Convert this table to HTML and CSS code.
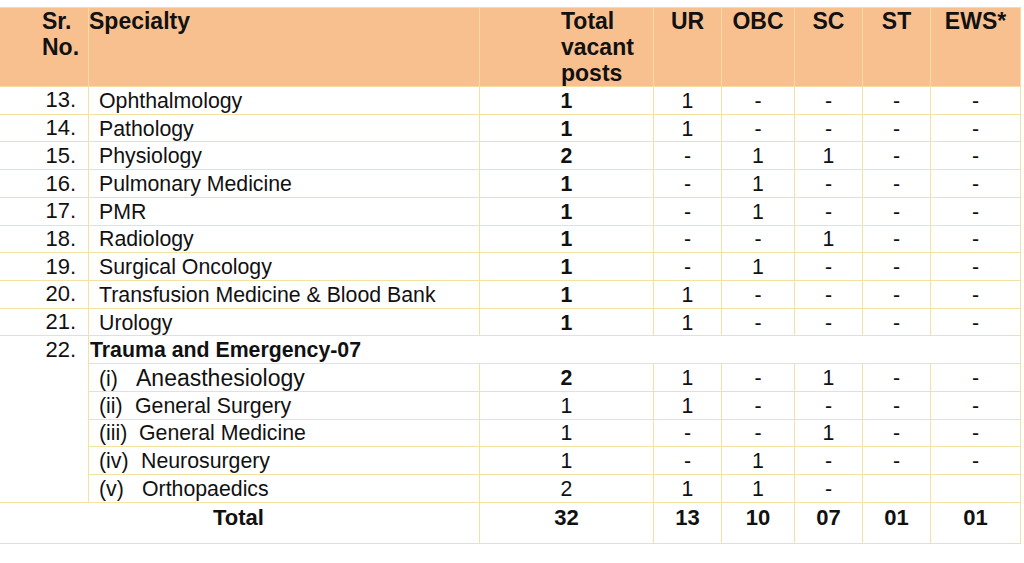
FILE: index.html
```html
<!DOCTYPE html>
<html>
<head>
<meta charset="utf-8">
<link rel="stylesheet" href="styles.css">
</head>
<body>
<table class="posts">
  <colgroup>
    <col class="c-sr"><col class="c-spec"><col class="c-total"><col class="c-ur"><col class="c-obc"><col class="c-sc"><col class="c-st"><col class="c-ews">
  </colgroup>
  <thead>
    <tr class="head">
      <th class="sr">Sr.<br>No.</th>
      <th class="spec">Specialty</th>
      <th class="tot">Total<br>vacant<br>posts</th>
      <th>UR</th>
      <th>OBC</th>
      <th>SC</th>
      <th>ST</th>
      <th>EWS*</th>
    </tr>
  </thead>
  <tbody>
    <tr><td class="sr">13.</td><td class="spec">Ophthalmology</td><td class="b">1</td><td>1</td><td>-</td><td>-</td><td>-</td><td>-</td></tr>
    <tr><td class="sr">14.</td><td class="spec">Pathology</td><td class="b">1</td><td>1</td><td>-</td><td>-</td><td>-</td><td>-</td></tr>
    <tr><td class="sr">15.</td><td class="spec">Physiology</td><td class="b">2</td><td>-</td><td>1</td><td>1</td><td>-</td><td>-</td></tr>
    <tr><td class="sr">16.</td><td class="spec">Pulmonary Medicine</td><td class="b">1</td><td>-</td><td>1</td><td>-</td><td>-</td><td>-</td></tr>
    <tr><td class="sr">17.</td><td class="spec">PMR</td><td class="b">1</td><td>-</td><td>1</td><td>-</td><td>-</td><td>-</td></tr>
    <tr><td class="sr">18.</td><td class="spec">Radiology</td><td class="b">1</td><td>-</td><td>-</td><td>1</td><td>-</td><td>-</td></tr>
    <tr><td class="sr">19.</td><td class="spec">Surgical Oncology</td><td class="b">1</td><td>-</td><td>1</td><td>-</td><td>-</td><td>-</td></tr>
    <tr><td class="sr">20.</td><td class="spec">Transfusion Medicine &amp; Blood Bank</td><td class="b">1</td><td>1</td><td>-</td><td>-</td><td>-</td><td>-</td></tr>
    <tr><td class="sr">21.</td><td class="spec">Urology</td><td class="b">1</td><td>1</td><td>-</td><td>-</td><td>-</td><td>-</td></tr>
    <tr><td class="sr" rowspan="6">22.</td><td class="group" colspan="7">Trauma and Emergency-07</td></tr>
    <tr><td class="spec sub"><span class="num">(i)</span><span class="big">Aneasthesiology</span></td><td class="b">2</td><td>1</td><td>-</td><td>1</td><td>-</td><td>-</td></tr>
    <tr><td class="spec sub"><span class="num n2">(ii)</span>General Surgery</td><td>1</td><td>1</td><td>-</td><td>-</td><td>-</td><td>-</td></tr>
    <tr><td class="spec sub"><span class="num n3">(iii)</span>General Medicine</td><td>1</td><td>-</td><td>-</td><td>1</td><td>-</td><td>-</td></tr>
    <tr><td class="spec sub"><span class="num n4">(iv)</span>Neurosurgery</td><td>1</td><td>-</td><td>1</td><td>-</td><td>-</td><td>-</td></tr>
    <tr><td class="spec sub"><span class="num n5">(v)</span>Orthopaedics</td><td>2</td><td>1</td><td>1</td><td>-</td><td></td><td></td></tr>
    <tr class="total"><td colspan="2" class="total-label">Total</td><td>32</td><td>13</td><td>10</td><td>07</td><td>01</td><td>01</td></tr>
  </tbody>
</table>
</body>
</html>
```

FILE: styles.css
```css
html, body {
  margin: 0;
  padding: 0;
  background: #ffffff;
}
body {
  padding-top: 7px;
  font-family: "Liberation Sans", Arial, sans-serif;
  color: #111111;
}
.posts {
  border-collapse: collapse;
  table-layout: fixed;
  width: 1021px;
  margin-left: -1px;
}
.c-sr { width: 89px; }
.c-spec { width: 391px; }
.c-total { width: 174px; }
.c-ur { width: 68px; }
.c-obc { width: 73px; }
.c-sc { width: 68px; }
.c-st { width: 68px; }
.c-ews { width: 90px; }

.posts th, .posts td {
  border: 1px solid #f3e3a2;
  padding: 0;
}
.head {
  height: 79px;
}
.head th {
  background: #f9c08f;
  font-weight: bold;
  font-size: 23px;
  line-height: 26px;
  vertical-align: top;
  text-align: center;
  padding-top: 0;
  border-color: #f6dca0;
}
.head th.sr {
  text-align: left;
  padding-left: 42px;
}
.head th.spec {
  text-align: left;
  padding-left: 0;
}
.head th.tot {
  text-align: left;
  padding-left: 81px;
}
.posts tbody tr {
  height: 27.73px;
}
.posts td {
  font-size: 21.3px;
  line-height: 23px;
  text-align: center;
  vertical-align: middle;
  padding-top: 2px;
}
.posts td.sr {
  font-size: 22px;
  text-align: right;
  padding-top: 0;
  padding-right: 12px;
  padding-bottom: 1px;
}
.posts td[rowspan].sr {
  vertical-align: top;
  padding-top: 2px;
}
.posts td.spec {
  text-align: left;
  padding-left: 10px;
}
.posts td.b {
  font-weight: bold;
}
.posts td.group {
  text-align: left;
  font-weight: bold;
  padding-left: 1px;
}
.num {
  display: inline-block;
  width: 37px;
}
.num.n2 { width: 36px; }
.num.n3 { width: 40px; }
.num.n4 { width: 42px; }
.num.n5 { width: 43px; }
.big {
  font-size: 23px;
  line-height: 23px;
}
.posts tr.total {
  height: 41px;
}
.posts tr.total td {
  font-weight: bold;
  font-size: 22px;
  vertical-align: top;
  padding-top: 3px;
}
.posts tr.total td.total-label {
  text-align: left;
  padding-left: 213px;
}
```
